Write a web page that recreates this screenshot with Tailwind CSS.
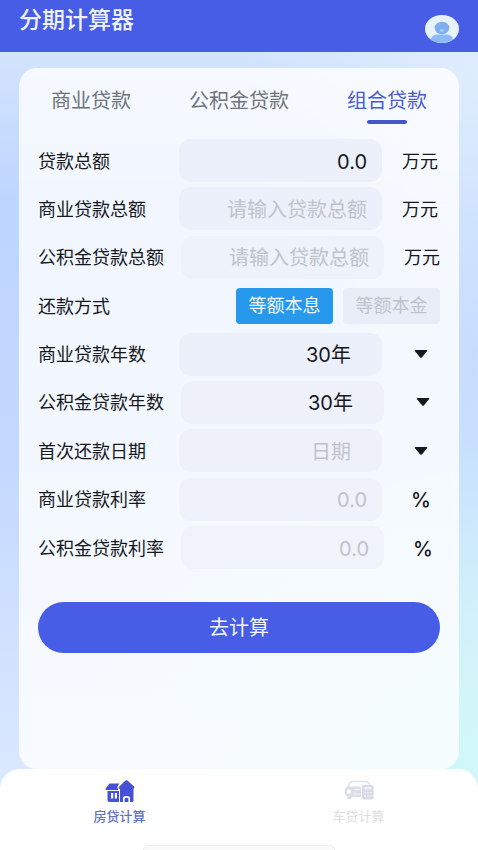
<!DOCTYPE html>
<html lang="zh-CN">
<head>
<meta charset="UTF-8">
<meta name="viewport" content="width=device-width, initial-scale=1">
<title>分期计算器</title>
<script src="https://cdn.jsdelivr.net/npm/@tailwindcss/browser@4"></script>
</head>
<body class="font-['Inter','Noto_Sans_CJK_SC',sans-serif] text-[#16181d]">
<div class="flex min-h-screen flex-col bg-[radial-gradient(circle_at_100%_88%,#d2f8f8_0%,#d2f8f800_45%),radial-gradient(ellipse_at_100%_6%,#deedfd_0%,#deedfd00_35%),linear-gradient(to_bottom,#d3e4fd_6%,#bdd5ff_24%,#c5d9ff_55%,#d9e8ff_90%)]">

  <header class="flex h-[52px] items-start justify-between bg-[#475de5] pl-[19px] pr-[19px]">
    <h1 class="pt-1 text-[23px] font-medium leading-[32px] text-[#eef2ff]">分期计算器</h1>
    <button type="button" aria-label="个人中心" class="mt-[15px]">
      <svg class="h-7 w-[34px]" viewBox="0 0 34 28" aria-hidden="true">
        <defs><clipPath id="face"><ellipse cx="17" cy="14" rx="17" ry="14"/></clipPath></defs>
        <g clip-path="url(#face)">
          <rect width="34" height="28" fill="#e6f3fd"/>
          <path d="M6 28V24Q7 19.500 13 19.500H21Q27 19.500 28 24V28Z" fill="#8dbaf5"/>
          <ellipse cx="17" cy="13" rx="7.300" ry="6.200" fill="#7eaeee"/>
          <ellipse cx="17" cy="15.500" rx="2.200" ry="1.300" fill="#a9d0fa"/>
        </g>
      </svg>
    </button>
  </header>

  <main class="mx-[19px] mt-4 flex-1 rounded-[18px] bg-white/80 pb-8 pt-[21px]">
    <nav aria-label="贷款类型" class="flex items-start justify-between px-8 text-xl leading-6 text-[#6d727d]">
      <button type="button">商业贷款</button>
      <button type="button">公积金贷款</button>
      <button type="button" aria-current="true" class="flex flex-col items-center gap-[7px] text-[#4a59c8]">组合贷款<span class="h-1 w-10 rounded-full bg-[#4655cc]"></span></button>
    </nav>

    <form class="pl-[19px] pr-[17px]">
      <div class="mt-[15px] flex h-[430px] flex-col justify-between text-lg">
        <div class="flex h-[43px] items-center">
          <label for="total" class="w-[141px] pt-[2px]">贷款总额</label>
          <input id="total" value="0.0" class="h-full min-w-0 flex-1 rounded-xl bg-[#ecf0fa] pr-[15px] pt-[2px] text-right text-xl">
          <span class="w-[60px] pl-4 pt-[2px] text-center">万元</span>
        </div>
        <div class="flex h-[43px] items-center">
          <label for="biz-total" class="w-[141px] pt-[2px]">商业贷款总额</label>
          <input id="biz-total" placeholder="请输入贷款总额" class="h-full min-w-0 flex-1 rounded-xl bg-[#ecf0fa] pr-[15px] pt-[2px] text-right text-xl placeholder:text-[#c0c3ca]">
          <span class="w-[60px] pl-4 pt-[2px] text-center">万元</span>
        </div>
        <div class="flex h-[43px] items-center">
          <label for="fund-total" class="w-[143px] pt-[2px]">公积金贷款总额</label>
          <input id="fund-total" placeholder="请输入贷款总额" class="h-full min-w-0 flex-1 rounded-xl bg-[#eef2fa] pr-[15px] pt-[2px] text-right text-xl placeholder:text-[#c0c3ca]">
          <span class="w-[58px] pl-[18px] pt-[2px] text-center">万元</span>
        </div>
        <div class="flex h-[43px] items-center justify-between pr-[2px]">
          <span class="pt-[2px]">还款方式</span>
          <div class="flex gap-[10px]">
            <button type="button" aria-pressed="true" class="h-9 w-[97px] rounded bg-[#2699ec] text-[#f1f8ff]">等额本息</button>
            <button type="button" aria-pressed="false" class="h-9 w-[97px] rounded bg-[#e8edf7] text-[#bfc3cb]">等额本金</button>
          </div>
        </div>
        <div class="flex h-[43px] items-center">
          <label for="biz-years" class="w-[141px] pt-[2px]">商业贷款年数</label>
          <select id="biz-years" class="h-full min-w-0 flex-1 appearance-none rounded-xl bg-[#ecf0fa] pr-[31px] pt-[2px] text-xl [text-align-last:right]"><option>30年</option></select>
          <span class="flex w-[60px] justify-center pl-[18px]"><svg class="h-2 w-[14px]" viewBox="0 0 14 8" aria-hidden="true"><path d="M1.500 0H12.500Q14 0 13 1.200L8 7.200Q7 8.400 6 7.200L1 1.200Q0 0 1.500 0Z" fill="#16181d"/></svg></span>
        </div>
        <div class="flex h-[43px] items-center">
          <label for="fund-years" class="w-[143px] pt-[2px]">公积金贷款年数</label>
          <select id="fund-years" class="h-full min-w-0 flex-1 appearance-none rounded-xl bg-[#eef1fa] pr-[31px] pt-[2px] text-xl [text-align-last:right]"><option>30年</option></select>
          <span class="flex w-[58px] justify-center pl-5"><svg class="h-2 w-[14px]" viewBox="0 0 14 8" aria-hidden="true"><path d="M1.500 0H12.500Q14 0 13 1.200L8 7.200Q7 8.400 6 7.200L1 1.200Q0 0 1.500 0Z" fill="#16181d"/></svg></span>
        </div>
        <div class="flex h-[43px] items-center">
          <label for="first-date" class="w-[141px] pt-[2px]">首次还款日期</label>
          <select id="first-date" class="h-full min-w-0 flex-1 appearance-none rounded-xl bg-[#eef1fa] pr-[31px] pt-[2px] text-xl text-[#c0c3ca] [text-align-last:right]"><option>日期</option></select>
          <span class="flex w-[60px] justify-center pl-[18px]"><svg class="h-2 w-[14px]" viewBox="0 0 14 8" aria-hidden="true"><path d="M1.500 0H12.500Q14 0 13 1.200L8 7.200Q7 8.400 6 7.200L1 1.200Q0 0 1.500 0Z" fill="#16181d"/></svg></span>
        </div>
        <div class="flex h-[43px] items-center">
          <label for="biz-rate" class="w-[141px] pt-[2px]">商业贷款利率</label>
          <input id="biz-rate" placeholder="0.0" class="h-full min-w-0 flex-1 rounded-xl bg-[#eff2fa] pr-[15px] pt-[2px] text-right text-xl placeholder:text-[#c0c3ca]">
          <span class="w-[60px] pl-[18px] pt-[2px] text-center text-xl font-medium">%</span>
        </div>
        <div class="flex h-[43px] items-center">
          <label for="fund-rate" class="w-[143px] pt-[2px]">公积金贷款利率</label>
          <input id="fund-rate" placeholder="0.0" class="h-full min-w-0 flex-1 rounded-xl bg-[#f0f3fa] pr-[15px] pt-[2px] text-right text-xl placeholder:text-[#c0c3ca]">
          <span class="w-[58px] pl-5 pt-[2px] text-center text-xl font-medium">%</span>
        </div>
      </div>
      <div class="pr-[2px] pt-[33px]">
        <button type="submit" class="h-[51px] w-full rounded-full bg-[#475de5] text-xl text-[#f3f6ff]">去计算</button>
      </div>
    </form>
  </main>

  <footer class="flex h-[81px] flex-col justify-between rounded-t-[20px] bg-white">
    <nav aria-label="主导航" class="grid grid-cols-2 pt-[11px] text-[13px] leading-5">
      <a href="#house" aria-current="page" class="flex flex-col items-center gap-[3px] font-medium text-[#6572bd]">
        <svg class="h-[23px] w-[30px]" viewBox="0 0 30 23" aria-hidden="true">
          <path d="M4.500 3.500H14.500L12.800 6Q12 7.500 13 9V10H1.500Q0 10 .700 8.500Z" fill="#4650d8"/>
          <path d="M2.500 11H14V22H4.500Q2.500 22 2.500 20Z" fill="#4650d8"/>
          <path d="M6 13H8.200V18.500H6ZM9.800 13H12V18.500H9.800Z" fill="#fff"/>
          <path d="M20.500 .500Q21.500 0 22.500 .500L29 6.500Q30 8 28.500 8.700V20.500Q28.500 22 27 22H15V9.500L14 8.500Q13.300 7.500 14.300 6.500Z" fill="#4650d8"/>
          <path d="M18 22V18Q18 16 21.500 16Q25 16 25 18V22H23.400V19Q23.400 17.800 21.500 17.800Q19.600 17.800 19.600 19V22Z" fill="#fff"/>
        </svg>
        房贷计算
      </a>
      <a href="#car" class="flex flex-col items-center gap-[3px] text-[#dcdee2]">
        <svg class="h-[23px] w-[30px]" viewBox="0 0 30 23" aria-hidden="true">
          <path d="M3.500 8L5.500 3.500Q6.500 1.500 9 1.500H21Q24 1.500 25.500 4.500" fill="none" stroke="#dfe1ea" stroke-width="1.500"/>
          <path d="M3 6.500H17V17H7.500V18Q7.500 19 6 19H4.500Q3 19 3 17.500V16Q.500 15 .500 12Q.500 9 3 6.500Z" fill="#dcdee7"/>
          <ellipse cx="5" cy="11.500" rx="2" ry="2.200" fill="#fff"/>
          <path d="M9 9.500H16M9 14H16" stroke="#f0f1f6"/>
          <rect x="18" y="5" width="11.500" height="14.500" rx="2" fill="#d7d9e4"/>
          <rect x="20" y="7" width="7.500" height="2.500" fill="#eef0f5"/>
          <path d="M20 12.500H22M23 12.500H24.500M25.500 12.500H27.500M20 16H22M23 16H24.500M25.500 16H27.500" stroke="#eef0f5" stroke-width="1.500"/>
        </svg>
        车贷计算
      </a>
    </nav>
    <div class="mx-auto h-[5px] w-2/5 rounded-t-full border border-b-0 border-[#eeeeee] bg-[#fafafa]"></div>
  </footer>
</div>
</body>
</html>
